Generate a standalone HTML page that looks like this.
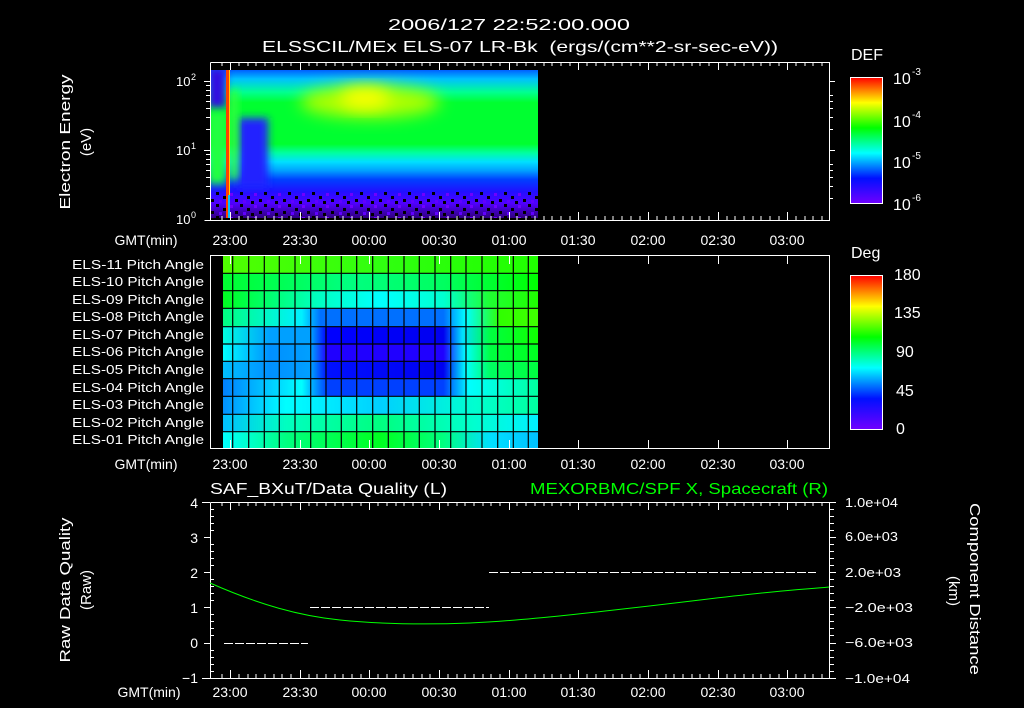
<!DOCTYPE html>
<html><head><meta charset="utf-8"><style>
html,body{margin:0;padding:0;background:#000;}
svg{display:block;}
text{font-family:"Liberation Sans",sans-serif;fill:#fff;}
</style></head><body>
<svg width="1024" height="708" viewBox="0 0 1024 708" xmlns="http://www.w3.org/2000/svg">
<defs>
<linearGradient id="rb" x1="0" y1="1" x2="0" y2="0">
<stop offset="0" stop-color="#7000ff"/><stop offset="0.2" stop-color="#0010ff"/><stop offset="0.4" stop-color="#00ffff"/><stop offset="0.6" stop-color="#00ff00"/><stop offset="0.8" stop-color="#ffff00"/><stop offset="1" stop-color="#ff0000"/>
</linearGradient>
<linearGradient id="spec" x1="0" y1="70" x2="0" y2="218" gradientUnits="userSpaceOnUse">
<stop offset="0" stop-color="#0060ff"/><stop offset="0.06" stop-color="#00c0ff"/><stop offset="0.15" stop-color="#00ff90"/><stop offset="0.22" stop-color="#00ff30"/><stop offset="0.5" stop-color="#00ff30"/><stop offset="0.56" stop-color="#00ffa0"/><stop offset="0.62" stop-color="#00e0ff"/><stop offset="0.68" stop-color="#00a0ff"/><stop offset="0.74" stop-color="#0040ff"/><stop offset="0.82" stop-color="#2010ff"/><stop offset="0.9" stop-color="#5000ff"/><stop offset="1" stop-color="#300080"/>
</linearGradient>
<filter id="bl" x="-50%" y="-50%" width="200%" height="200%"><feGaussianBlur stdDeviation="8"/></filter>
<filter id="bl2" x="-50%" y="-50%" width="200%" height="200%"><feGaussianBlur stdDeviation="4"/></filter>
<pattern id="noise" width="24" height="12" patternUnits="userSpaceOnUse">
<rect x="0" y="0" width="3" height="3" fill="#000"/><rect x="7" y="4" width="3" height="3" fill="#000"/><rect x="14" y="1" width="3" height="3" fill="#7000ff"/><rect x="19" y="7" width="3" height="3" fill="#000"/><rect x="3" y="8" width="3" height="3" fill="#6000ff"/><rect x="11" y="9" width="3" height="3" fill="#000"/>
</pattern>
<clipPath id="cp"><rect x="210" y="70" width="328" height="148"/></clipPath>
</defs>

<text x="388" y="30" font-size="16" textLength="242" lengthAdjust="spacingAndGlyphs">2006/127 22:52:00.000</text>
<text x="262" y="52" font-size="16" textLength="516" lengthAdjust="spacingAndGlyphs" xml:space="preserve">ELSSCIL/MEx ELS-07 LR-Bk  (ergs/(cm**2-sr-sec-eV))</text>

<!-- ===== Top panel ===== -->
<g clip-path="url(#cp)">
<rect x="210" y="70" width="328" height="148" fill="url(#spec)"/>
<ellipse cx="370" cy="102" rx="70" ry="16" fill="#b0ff00" filter="url(#bl)"/>
<ellipse cx="365" cy="98" rx="25" ry="10" fill="#ffff00" filter="url(#bl)"/>
<rect x="238" y="118" width="30" height="70" fill="#2020ff" filter="url(#bl2)"/>
<rect x="208" y="68" width="18" height="40" fill="#3010e0" filter="url(#bl2)"/>
<rect x="208" y="112" width="18" height="72" fill="#20ff40" filter="url(#bl2)"/>
<rect x="230" y="90" width="8" height="90" fill="#30ff40" filter="url(#bl2)"/>
<rect x="210" y="192" width="328" height="26" fill="url(#noise)"/>
</g>
<rect x="226" y="70" width="3" height="148" fill="#ff4000"/>
<rect x="229" y="70" width="1" height="148" fill="#ffd000"/>
<rect x="228" y="195" width="2" height="23" fill="#00c0ff"/>
<g stroke="#fff" fill="none" stroke-width="1">
<path d="M210.5 62.5H829.5V220.5H204.5M210.5 62.5V220.5"/>
<path d="M204 81.5H210M204 150.5H210M206 129.5H210M206 117.5H210M206 108.5H210M206 101.5H210M206 95.5H210M206 90.5H210M206 85.5H210M206 198.5H210M206 186.5H210M206 177.5H210M206 170.5H210M206 164.5H210M206 159.5H210M206 154.5H210"/>
<path d="M829 81.5H835M829 150.5H835M829 129.5H833M829 117.5H833M829 108.5H833M829 101.5H833M829 95.5H833M829 198.5H833M829 186.5H833M829 177.5H833M829 170.5H833M829 164.5H833"/>
</g>
<text x="176" y="86" font-size="13">10</text><text x="191" y="80" font-size="9">2</text>
<text x="176" y="155" font-size="13">10</text><text x="191" y="149" font-size="9">1</text>
<text x="176" y="224" font-size="13">10</text><text x="191" y="218" font-size="9">0</text>
<text transform="translate(70,142) rotate(-90)" font-size="15" text-anchor="middle" textLength="135" lengthAdjust="spacingAndGlyphs">Electron Energy</text>
<text transform="translate(91,142) rotate(-90)" font-size="15" text-anchor="middle">(eV)</text>

<text x="851" y="60" font-size="16" textLength="32" lengthAdjust="spacingAndGlyphs">DEF</text>
<rect x="850.5" y="77.5" width="32" height="126" fill="url(#rb)" stroke="#fff"/>
<text x="893" y="84" font-size="16">10</text><text x="912" y="75" font-size="10">-3</text>
<text x="893" y="127" font-size="16">10</text><text x="912" y="118" font-size="10">-4</text>
<text x="893" y="168" font-size="16">10</text><text x="912" y="159" font-size="10">-5</text>
<text x="893" y="210" font-size="16">10</text><text x="912" y="201" font-size="10">-6</text>

<!-- ===== Middle panel ===== -->
<g>
<defs>
<linearGradient id="r0" x1="223" x2="538" gradientUnits="userSpaceOnUse"><stop offset="0" stop-color="#50ff00"/><stop offset="0.5" stop-color="#30ff10"/><stop offset="1" stop-color="#20ff00"/></linearGradient>
<linearGradient id="r1" x1="223" x2="538" gradientUnits="userSpaceOnUse"><stop offset="0" stop-color="#00ff30"/><stop offset="0.4" stop-color="#00ff80"/><stop offset="0.7" stop-color="#00ff60"/><stop offset="1" stop-color="#00ff00"/></linearGradient>
<linearGradient id="r2" x1="223" x2="538" gradientUnits="userSpaceOnUse"><stop offset="0" stop-color="#00ff20"/><stop offset="0.3" stop-color="#00ffc0"/><stop offset="0.5" stop-color="#00ffff"/><stop offset="0.7" stop-color="#00ffd0"/><stop offset="0.85" stop-color="#20ff30"/><stop offset="1" stop-color="#20ff00"/></linearGradient>
<linearGradient id="r3" x1="223" x2="538" gradientUnits="userSpaceOnUse"><stop offset="0" stop-color="#00ff80"/><stop offset="0.25" stop-color="#00f0ff"/><stop offset="0.31" stop-color="#0070ff"/><stop offset="0.7" stop-color="#0070ff"/><stop offset="0.77" stop-color="#00ffff"/><stop offset="0.88" stop-color="#30ff00"/><stop offset="1" stop-color="#40ff00"/></linearGradient>
<linearGradient id="r4" x1="223" x2="538" gradientUnits="userSpaceOnUse"><stop offset="0" stop-color="#00ffe0"/><stop offset="0.15" stop-color="#00a0ff"/><stop offset="0.28" stop-color="#00a0ff"/><stop offset="0.33" stop-color="#0000ff"/><stop offset="0.7" stop-color="#0000f0"/><stop offset="0.76" stop-color="#00e0ff"/><stop offset="0.85" stop-color="#00ff40"/><stop offset="1" stop-color="#10ff00"/></linearGradient>
<linearGradient id="r5" x1="223" x2="538" gradientUnits="userSpaceOnUse"><stop offset="0" stop-color="#00ffff"/><stop offset="0.15" stop-color="#0090ff"/><stop offset="0.28" stop-color="#00a0ff"/><stop offset="0.33" stop-color="#2000ff"/><stop offset="0.7" stop-color="#2000ff"/><stop offset="0.77" stop-color="#00ffff"/><stop offset="0.85" stop-color="#00ff40"/><stop offset="1" stop-color="#00ff20"/></linearGradient>
<linearGradient id="r6" x1="223" x2="538" gradientUnits="userSpaceOnUse"><stop offset="0" stop-color="#00c0ff"/><stop offset="0.15" stop-color="#0090ff"/><stop offset="0.28" stop-color="#00a0ff"/><stop offset="0.33" stop-color="#0010ff"/><stop offset="0.7" stop-color="#0000f0"/><stop offset="0.77" stop-color="#00ffff"/><stop offset="0.85" stop-color="#00ff60"/><stop offset="1" stop-color="#00ff40"/></linearGradient>
<linearGradient id="r7" x1="223" x2="538" gradientUnits="userSpaceOnUse"><stop offset="0" stop-color="#0080ff"/><stop offset="0.25" stop-color="#00ffff"/><stop offset="0.33" stop-color="#0040ff"/><stop offset="0.7" stop-color="#0040ff"/><stop offset="0.78" stop-color="#00ffff"/><stop offset="1" stop-color="#00ffa0"/></linearGradient>
<linearGradient id="r8" x1="223" x2="538" gradientUnits="userSpaceOnUse"><stop offset="0" stop-color="#0090ff"/><stop offset="0.2" stop-color="#00ffff"/><stop offset="0.5" stop-color="#00d0ff"/><stop offset="0.8" stop-color="#00ffd0"/><stop offset="1" stop-color="#00ffa0"/></linearGradient>
<linearGradient id="r9" x1="223" x2="538" gradientUnits="userSpaceOnUse"><stop offset="0" stop-color="#00c0ff"/><stop offset="0.2" stop-color="#00ffc0"/><stop offset="0.5" stop-color="#00ff80"/><stop offset="0.8" stop-color="#00ffd0"/><stop offset="1" stop-color="#00f0ff"/></linearGradient>
<linearGradient id="r10" x1="223" x2="538" gradientUnits="userSpaceOnUse"><stop offset="0" stop-color="#00ffff"/><stop offset="0.2" stop-color="#00ff80"/><stop offset="0.5" stop-color="#00ff20"/><stop offset="0.7" stop-color="#00ff80"/><stop offset="0.85" stop-color="#00e0ff"/><stop offset="1" stop-color="#00c0ff"/></linearGradient>
</defs>
<rect x="223" y="256" width="315" height="17.3" fill="url(#r0)"/>
<rect x="223" y="273.3" width="315" height="17.4" fill="url(#r1)"/>
<rect x="223" y="290.7" width="315" height="17.6" fill="url(#r2)"/>
<rect x="223" y="308.3" width="315" height="18.4" fill="url(#r3)"/>
<rect x="223" y="326.7" width="315" height="17.3" fill="url(#r4)"/>
<rect x="223" y="344" width="315" height="17.3" fill="url(#r5)"/>
<rect x="223" y="361.3" width="315" height="17.4" fill="url(#r6)"/>
<rect x="223" y="378.7" width="315" height="17.6" fill="url(#r7)"/>
<rect x="223" y="396.3" width="315" height="18" fill="url(#r8)"/>
<rect x="223" y="414.3" width="315" height="17.4" fill="url(#r9)"/>
<rect x="223" y="431.7" width="315" height="16.3" fill="url(#r10)"/>
<g stroke="#000" stroke-width="1.2">
<path d="M232.7 256V448M248.7 256V448M264.3 256V448M279.3 256V448M295 256V448M310.7 256V448M326 256V448M341.3 256V448M356.7 256V448M372.7 256V448M388.3 256V448M404 256V448M419.3 256V448M435 256V448M450.7 256V448M466 256V448M482 256V448M497.7 256V448M513.3 256V448M528.3 256V448"/>
<path d="M223 273.3H538M223 290.7H538M223 308.3H538M223 326.7H538M223 344H538M223 361.3H538M223 378.7H538M223 396.3H538M223 414.3H538M223 431.7H538"/>
</g>
</g>
<g stroke="#fff" fill="none"><path d="M210.5 255.5H829.5V448.5H210.5Z"/></g>
<g font-size="13">
<text x="72" y="269" textLength="132" lengthAdjust="spacingAndGlyphs">ELS-11 Pitch Angle</text>
<text x="72" y="286" textLength="132" lengthAdjust="spacingAndGlyphs">ELS-10 Pitch Angle</text>
<text x="72" y="304" textLength="132" lengthAdjust="spacingAndGlyphs">ELS-09 Pitch Angle</text>
<text x="72" y="321" textLength="132" lengthAdjust="spacingAndGlyphs">ELS-08 Pitch Angle</text>
<text x="72" y="339" textLength="132" lengthAdjust="spacingAndGlyphs">ELS-07 Pitch Angle</text>
<text x="72" y="356" textLength="132" lengthAdjust="spacingAndGlyphs">ELS-06 Pitch Angle</text>
<text x="72" y="374" textLength="132" lengthAdjust="spacingAndGlyphs">ELS-05 Pitch Angle</text>
<text x="72" y="392" textLength="132" lengthAdjust="spacingAndGlyphs">ELS-04 Pitch Angle</text>
<text x="72" y="409" textLength="132" lengthAdjust="spacingAndGlyphs">ELS-03 Pitch Angle</text>
<text x="72" y="427" textLength="132" lengthAdjust="spacingAndGlyphs">ELS-02 Pitch Angle</text>
<text x="72" y="444" textLength="132" lengthAdjust="spacingAndGlyphs">ELS-01 Pitch Angle</text>
</g>
<text x="851" y="258" font-size="16">Deg</text>
<rect x="850.5" y="275.5" width="32" height="154" fill="url(#rb)" stroke="#fff"/>
<g font-size="16">
<text x="894" y="280">180</text><text x="894" y="318">135</text><text x="896" y="357">90</text><text x="896" y="396">45</text><text x="896" y="434">0</text>
</g>

<!-- ===== Bottom panel ===== -->
<text x="210" y="494" font-size="16" textLength="237" lengthAdjust="spacingAndGlyphs">SAF_BXuT/Data Quality (L)</text>
<text x="530" y="494" font-size="16" style="fill:#00ff00" textLength="298" lengthAdjust="spacingAndGlyphs">MEXORBMC/SPF X, Spacecraft (R)</text>
<g stroke="#fff" fill="none"><path d="M210.5 502.5H829.5V678.5H202M210.5 502.5V678.5M202 502.5H210"/>
<path d="M204 537.5H210M204 572.5H210M204 607.5H210M204 643.5H210M210 509.5H214M210 516.5H214M210 523.5H214M210 530.5H214M210 544.5H214M210 551.5H214M210 558.5H214M210 565.5H214M210 579.5H214M210 586.5H214M210 593.5H214M210 600.5H214M210 614.5H214M210 621.5H214M210 628.5H214M210 635.5H214M210 650.5H214M210 657.5H214M210 664.5H214M210 671.5H214"/>
<path d="M829 537.5H836M829 572.5H836M829 607.5H836M829 643.5H836M829 502.5H836M829 678.5H836M829 509.5H834M829 516.5H834M829 523.5H834M829 530.5H834M829 544.5H834M829 551.5H834M829 558.5H834M829 565.5H834M829 579.5H834M829 586.5H834M829 593.5H834M829 600.5H834M829 614.5H834M829 621.5H834M829 628.5H834M829 635.5H834M829 650.5H834M829 657.5H834M829 664.5H834M829 671.5H834"/>
</g>
<g font-size="14" text-anchor="end">
<text x="198" y="508">4</text><text x="198" y="543">3</text><text x="198" y="578">2</text><text x="198" y="613">1</text><text x="198" y="648">0</text><text x="198" y="683">−1</text>
</g>
<g font-size="13">
<text x="845" y="507" textLength="53" lengthAdjust="spacingAndGlyphs">1.0e+04</text><text x="845" y="541" textLength="53" lengthAdjust="spacingAndGlyphs">6.0e+03</text><text x="845" y="577" textLength="56" lengthAdjust="spacingAndGlyphs">2.0e+03</text><text x="845" y="612" textLength="68" lengthAdjust="spacingAndGlyphs">−2.0e+03</text><text x="845" y="647" textLength="68" lengthAdjust="spacingAndGlyphs">−6.0e+03</text><text x="845" y="683" textLength="65" lengthAdjust="spacingAndGlyphs">−1.0e+04</text>
</g>
<text transform="translate(70,590) rotate(-90)" font-size="15" text-anchor="middle" textLength="145" lengthAdjust="spacingAndGlyphs">Raw Data Quality</text>
<text transform="translate(91,590) rotate(-90)" font-size="15" text-anchor="middle">(Raw)</text>
<text transform="translate(970,589) rotate(90)" font-size="15" text-anchor="middle" textLength="172" lengthAdjust="spacingAndGlyphs">Component Distance</text>
<text transform="translate(949,591) rotate(90)" font-size="15" text-anchor="middle">(km)</text>
<g stroke="#fff" stroke-dasharray="9,2" fill="none">
<path d="M224 643.5H308M310 607.5H489M489 572.5H816"/>
</g>
<path d="M210 583 C260 605,300 616,340 620 S420 625,470 623 S600 612,700 600 S800 590,829 587" stroke="#00ff00" fill="none"/>

<!-- time axes -->
<g stroke="#fff" fill="none">
<path d="M230.5 220V212M300.5 220V212M369.5 220V212M439.5 220V212M509.5 220V212M578.5 220V212M648.5 220V212M718.5 220V212M787.5 220V212M230.5 62V70M300.5 62V70M369.5 62V70M439.5 62V70M509.5 62V70M578.5 62V70M648.5 62V70M718.5 62V70M787.5 62V70"/>
<path d="M222 220V216M239 220V216M248 220V216M256 220V216M265 220V216M274 220V216M282 220V216M291 220V216M309 220V216M317 220V216M326 220V216M335 220V216M343 220V216M352 220V216M361 220V216M378 220V216M387 220V216M396 220V216M404 220V216M413 220V216M422 220V216M430 220V216M448 220V216M457 220V216M465 220V216M474 220V216M483 220V216M491 220V216M500 220V216M517 220V216M526 220V216M535 220V216M544 220V216M552 220V216M561 220V216M570 220V216M587 220V216M596 220V216M605 220V216M613 220V216M622 220V216M631 220V216M640 220V216M657 220V216M666 220V216M674 220V216M683 220V216M692 220V216M700 220V216M709 220V216M727 220V216M735 220V216M744 220V216M753 220V216M761 220V216M770 220V216M779 220V216M796 220V216M805 220V216M813 220V216M822 220V216"/>
<path d="M222 62V66M239 62V66M248 62V66M256 62V66M265 62V66M274 62V66M282 62V66M291 62V66M309 62V66M317 62V66M326 62V66M335 62V66M343 62V66M352 62V66M361 62V66M378 62V66M387 62V66M396 62V66M404 62V66M413 62V66M422 62V66M430 62V66M448 62V66M457 62V66M465 62V66M474 62V66M483 62V66M491 62V66M500 62V66M517 62V66M526 62V66M535 62V66M544 62V66M552 62V66M561 62V66M570 62V66M587 62V66M596 62V66M605 62V66M613 62V66M622 62V66M631 62V66M640 62V66M657 62V66M666 62V66M674 62V66M683 62V66M692 62V66M700 62V66M709 62V66M727 62V66M735 62V66M744 62V66M753 62V66M761 62V66M770 62V66M779 62V66M796 62V66M805 62V66M813 62V66M822 62V66"/>
</g>
<g stroke="#fff" fill="none">
<path d="M230.5 448V440M300.5 448V440M369.5 448V440M439.5 448V440M509.5 448V440M578.5 448V440M648.5 448V440M718.5 448V440M787.5 448V440M230.5 256V264M300.5 256V264M369.5 256V264M439.5 256V264M509.5 256V264M578.5 256V264M648.5 256V264M718.5 256V264M787.5 256V264"/>
<path d="M230.5 678V670M300.5 678V670M369.5 678V670M439.5 678V670M509.5 678V670M578.5 678V670M648.5 678V670M718.5 678V670M787.5 678V670M230.5 502V510M300.5 502V510M369.5 502V510M439.5 502V510M509.5 502V510M578.5 502V510M648.5 502V510M718.5 502V510M787.5 502V510"/>
<path d="M222 678V674M239 678V674M248 678V674M256 678V674M265 678V674M274 678V674M282 678V674M291 678V674M309 678V674M317 678V674M326 678V674M335 678V674M343 678V674M352 678V674M361 678V674M378 678V674M387 678V674M396 678V674M404 678V674M413 678V674M422 678V674M430 678V674M448 678V674M457 678V674M465 678V674M474 678V674M483 678V674M491 678V674M500 678V674M517 678V674M526 678V674M535 678V674M544 678V674M552 678V674M561 678V674M570 678V674M587 678V674M596 678V674M605 678V674M613 678V674M622 678V674M631 678V674M640 678V674M657 678V674M666 678V674M674 678V674M683 678V674M692 678V674M700 678V674M709 678V674M727 678V674M735 678V674M744 678V674M753 678V674M761 678V674M770 678V674M779 678V674M796 678V674M805 678V674M813 678V674M822 678V674"/>
<path d="M222 502V506M239 502V506M248 502V506M256 502V506M265 502V506M274 502V506M282 502V506M291 502V506M309 502V506M317 502V506M326 502V506M335 502V506M343 502V506M352 502V506M361 502V506M378 502V506M387 502V506M396 502V506M404 502V506M413 502V506M422 502V506M430 502V506M448 502V506M457 502V506M465 502V506M474 502V506M483 502V506M491 502V506M500 502V506M517 502V506M526 502V506M535 502V506M544 502V506M552 502V506M561 502V506M570 502V506M587 502V506M596 502V506M605 502V506M613 502V506M622 502V506M631 502V506M640 502V506M657 502V506M666 502V506M674 502V506M683 502V506M692 502V506M700 502V506M709 502V506M727 502V506M735 502V506M744 502V506M753 502V506M761 502V506M770 502V506M779 502V506M796 502V506M805 502V506M813 502V506M822 502V506"/>
</g>
<g font-size="14" text-anchor="middle">
<text x="146" y="245">GMT(min)</text>
<text x="230" y="245">23:00</text><text x="300" y="245">23:30</text><text x="369" y="245">00:00</text><text x="439" y="245">00:30</text><text x="509" y="245">01:00</text><text x="578" y="245">01:30</text><text x="648" y="245">02:00</text><text x="718" y="245">02:30</text><text x="787" y="245">03:00</text>
<text x="146" y="469">GMT(min)</text>
<text x="230" y="469">23:00</text><text x="300" y="469">23:30</text><text x="369" y="469">00:00</text><text x="439" y="469">00:30</text><text x="509" y="469">01:00</text><text x="578" y="469">01:30</text><text x="648" y="469">02:00</text><text x="718" y="469">02:30</text><text x="787" y="469">03:00</text>
<text x="149" y="697">GMT(min)</text>
<text x="230" y="697">23:00</text><text x="300" y="697">23:30</text><text x="369" y="697">00:00</text><text x="439" y="697">00:30</text><text x="509" y="697">01:00</text><text x="578" y="697">01:30</text><text x="648" y="697">02:00</text><text x="718" y="697">02:30</text><text x="787" y="697">03:00</text>
</g>
</svg>
</body></html>
